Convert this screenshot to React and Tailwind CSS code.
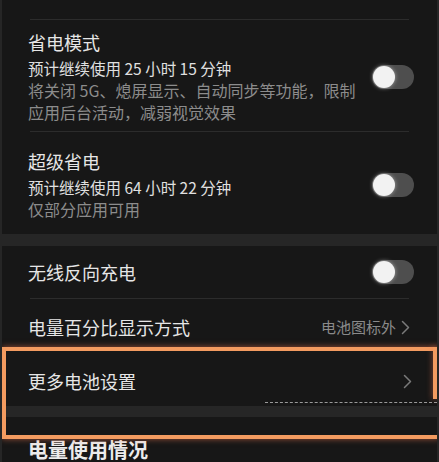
import React from 'react';

const font = { fontFamily: '"Noto Sans CJK SC", "Noto Sans", sans-serif' };

function Toggle() {
  return (
    <div className="w-[42px] h-[24px] rounded-full bg-[#4e4e4e] flex items-center px-[1px] shrink-0">
      <div className="w-[22px] h-[22px] rounded-full bg-[#f2f2f2] shadow-[0_0_4px_rgba(255,255,255,0.5)]" />
    </div>
  );
}

function Chevron() {
  return (
    <svg width="9" height="15" viewBox="0 0 9 15" fill="none" className="shrink-0">
      <path d="M1.5 1.5 L7.5 7.5 L1.5 13.5" stroke="#7a7a7a" strokeWidth="1.5" strokeLinecap="round" strokeLinejoin="round" />
    </svg>
  );
}

function Divider() {
  return <div className="h-px mx-7 bg-[#2c2c2c]" />;
}

export default function App() {
  return (
    <div
      style={font}
      className="relative w-[439px] h-[462px] overflow-hidden bg-[#171717] border-x-2 border-[#262626]"
    >
      {/* top */}
      <div className="h-[19px]" />
      <Divider />

      {/* 省电模式 */}
      <div className="flex items-center pl-[26px] pr-[23px] pt-[10px] pb-[8px]">
        <div className="flex-1">
          <div className="text-[18px] leading-[24px] text-[#e6e6e6]">省电模式</div>
          <div className="mt-[3px] text-[15.5px] leading-[22px] text-[#e0e0e0]">预计继续使用 25 小时 15 分钟</div>
          <div className="text-[16px] leading-[22px] text-[#8c8c8c]">
            <div>将关闭 5G、熄屏显示、自动同步等功能，限制</div>
            <div>应用后台活动，减弱视觉效果</div>
          </div>
        </div>
        <Toggle />
      </div>
      <Divider />

      {/* 超级省电 */}
      <div className="flex items-center pl-[26px] pr-[23px] pt-[17px] pb-[14px]">
        <div className="flex-1">
          <div className="text-[18px] leading-[24px] text-[#e6e6e6]">超级省电</div>
          <div className="mt-[3px] text-[15.5px] leading-[22px] text-[#e0e0e0]">预计继续使用 64 小时 22 分钟</div>
          <div className="text-[16px] leading-[22px] text-[#8c8c8c]">仅部分应用可用</div>
        </div>
        <Toggle />
      </div>

      <div className="h-[12px] bg-[#262626]" />

      {/* 无线反向充电 */}
      <div className="flex items-center h-[52px] pl-[26px] pr-[23px]">
        <div className="flex-1 text-[18px] text-[#e6e6e6]">无线反向充电</div>
        <Toggle />
      </div>
      <Divider />

      {/* 电量百分比显示方式 */}
      <div className="flex items-center h-[57px] pl-[26px] pr-[27px]">
        <div className="flex-1 text-[18px] text-[#e6e6e6]">电量百分比显示方式</div>
        <span className="text-[15px] text-[#8a8a8a] mr-[5px]">电池图标外</span>
        <Chevron />
      </div>

      {/* 更多电池设置 */}
      <div className="flex items-center h-[46px] pt-[4px] pl-[26px] pr-[25px]">
        <div className="flex-1 text-[18px] text-[#e6e6e6]">更多电池设置</div>
        <Chevron />
      </div>
      <div className="h-px ml-[263px] border-t border-dashed border-[#9a9a9a]" />
      <div className="h-[3px]" />

      <div className="h-[11px] bg-[#262626]" />

      {/* 电量使用情况 */}
      <div className="pl-[26px] pt-[20px]">
        <div className="text-[20px] leading-[26px] font-bold text-[#ececec]">电量使用情况</div>
      </div>

      {/* orange highlight annotation */}
      <div className="absolute left-0 top-[347px] w-[437px] h-[92px] border-l-4 border-t-4 border-b-4 border-[#f39b60] shadow-[0_0_6px_rgba(243,120,80,0.6)] pointer-events-none" />
      <div className="absolute left-[431px] top-[347px] w-[4px] h-[52px] bg-[#f39b60] shadow-[0_0_6px_rgba(243,120,80,0.6)] pointer-events-none" />
    </div>
  );
}
